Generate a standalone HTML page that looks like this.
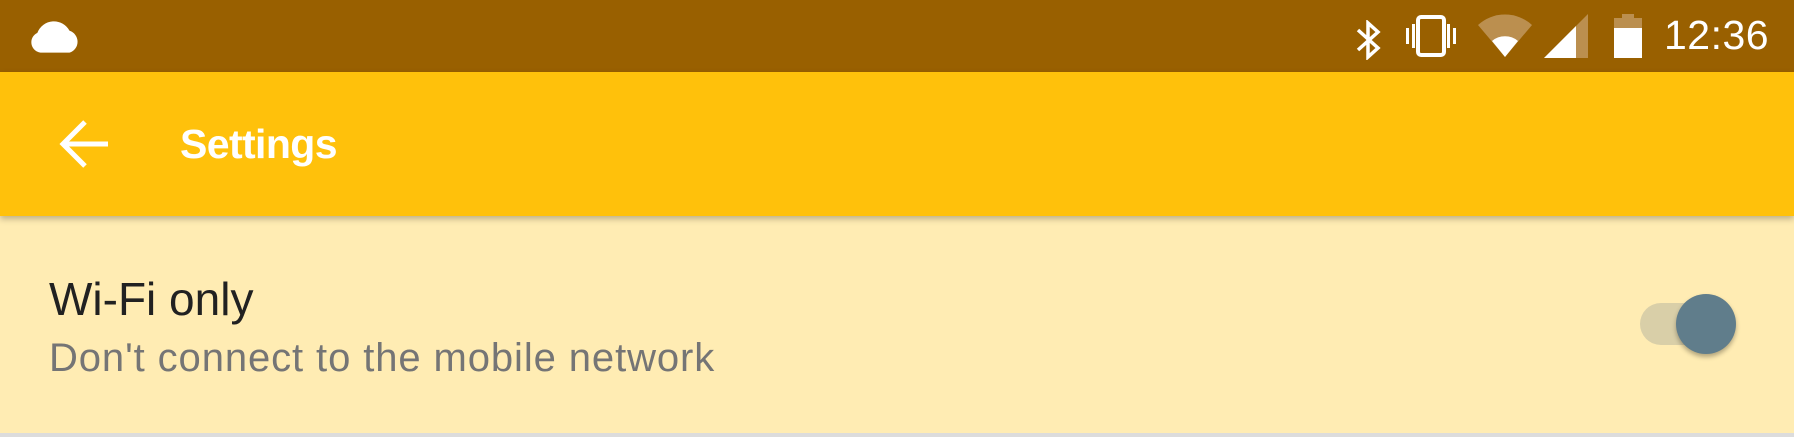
<!DOCTYPE html>
<html><head><style>
body{margin:0;width:1794px;height:437px;overflow:hidden;background:#ffecb3;font-family:"Liberation Sans",sans-serif;position:relative}
.sb{position:absolute;left:0;top:0;width:1794px;height:72px;background:#996000}
.tb{position:absolute;left:0;top:72px;width:1794px;height:144px;background:#ffc10b;box-shadow:0 3px 6px rgba(0,0,0,.25)}
.abs{position:absolute}
</style></head><body>
<div class="sb">
<svg class="abs" style="left:28px;top:17px" width="54" height="38" viewBox="0 0 52 36"><path d="M12 34 A10 10 0 0 1 9 15 A17 17 0 0 1 40 13 A11 11 0 0 1 40 34 Z" fill="#fff"/></svg>
<svg class="abs" style="left:1352px;top:20px" width="34" height="40" viewBox="0 0 34 40"><path d="M6 10 L26 28 L16 37 V3 L26 12 L6 30" fill="none" stroke="#fff" stroke-width="3.5"/></svg>
<svg class="abs" style="left:1404px;top:14px" width="58" height="44" viewBox="0 0 58 44"><rect x="14" y="3" width="26" height="38" rx="3" fill="none" stroke="#fff" stroke-width="4"/><rect x="2" y="14" width="3" height="16" fill="#fff"/><rect x="8" y="10" width="3" height="24" fill="#fff"/><rect x="43" y="10" width="3" height="24" fill="#fff"/><rect x="49" y="14" width="3" height="16" fill="#fff"/></svg>
<svg class="abs" style="left:1476px;top:13px" width="58" height="46" viewBox="0 0 58 46"><path d="M2 12 A40 40 0 0 1 56 12 L29 44 Z" fill="#bb8f4f"/><path d="M16 28 A20 20 0 0 1 42 28 L29 44 Z" fill="#fff"/></svg>
<svg class="abs" style="left:1542px;top:13px" width="48" height="46" viewBox="0 0 48 46"><path d="M2 45 L46 1 V45 Z" fill="#bb8f4f"/><path d="M2 45 L34 13 V45 Z" fill="#fff"/></svg>
<svg class="abs" style="left:1612px;top:13px" width="32" height="46" viewBox="0 0 32 46"><rect x="10" y="1" width="12" height="5" fill="#bb8f4f"/><rect x="2" y="5" width="28" height="10" fill="#bb8f4f"/><rect x="2" y="15" width="28" height="30" fill="#fff"/></svg>
<div class="abs" style="left:1664px;top:12px;font-size:41px;color:#fff;letter-spacing:0.5px">12:36</div>
</div>
<div class="tb">
<svg class="abs" style="left:58px;top:46px" width="52" height="52" viewBox="0 0 52 52"><path d="M50 26 H6 M27 4 L5 26 L27 48" fill="none" stroke="#fff" stroke-width="5"/></svg>
<div class="abs" style="left:180px;top:49px;font-size:41px;font-weight:bold;color:#fff;letter-spacing:-0.6px">Settings</div>
</div>
<div class="abs" style="left:49px;top:272px;font-size:46px;color:#212121">Wi-Fi only</div>
<div class="abs" style="left:49px;top:336px;font-size:40px;color:#757575;letter-spacing:0.9px">Don't connect to the mobile network</div>
<div class="abs" style="left:1640px;top:303px;width:78px;height:42px;border-radius:21px;background:#d9cfa8"></div>
<div class="abs" style="left:1676px;top:294px;width:60px;height:60px;border-radius:50%;background:#607d8b;box-shadow:0 3px 5px rgba(0,0,0,.3)"></div>
<div class="abs" style="left:0;top:433px;width:1794px;height:4px;background:#dcdcdc"></div>
</body></html>
